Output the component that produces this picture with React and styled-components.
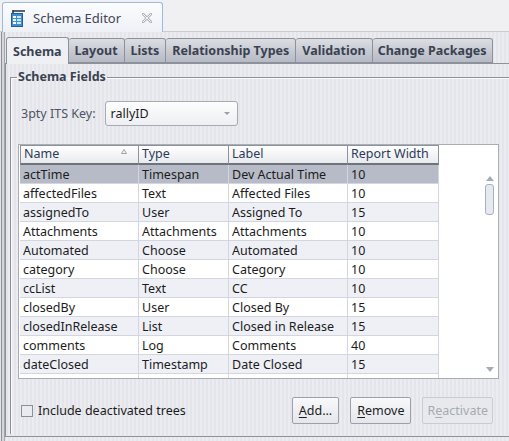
import styled, { createGlobalStyle } from 'styled-components';

const stripes = `repeating-linear-gradient(90deg, #e4e5ea 0px, #e4e5ea 2px, #ececf0 2px, #ececf0 4px)`;

const GlobalStyle = createGlobalStyle`
    html, body {
        margin: 0;
        padding: 0;
    }
    body {
        font-family: "Noto Sans", "Open Sans", sans-serif;
        font-size: 12px;
        color: #1c1c1c;
        background: #e8e9ed;
    }
`;

const Window = styled.div`
    width: 509px;
    height: 441px;
    background: ${stripes};
    display: flex;
    flex-direction: column;
    overflow: hidden;
    box-sizing: border-box;
`;

const ViewBar = styled.div`
    height: 32px;
    display: flex;
    align-items: flex-end;
    padding-left: 2px;
    border-bottom: 1px solid #c9ccd3;
    background: #f0f0f3;
`;

const ViewTab = styled.div`
    width: 161px;
    height: 30px;
    box-sizing: border-box;
    border: 1px solid #9dbbe0;
    border-bottom: none;
    border-radius: 3px 3px 0 0;
    background: linear-gradient(#fbfcfe, #eef1f6);
    display: flex;
    align-items: center;
    padding: 0 10px 0 7px;
    gap: 7px;
    font-size: 13px;
    color: #3f4654;
    margin-bottom: -1px;
    span {
        flex: 1;
    }
`;

const Body = styled.div`
    flex: 1;
    display: flex;
    flex-direction: column;
    margin-left: 1px;
    border-left: 1px solid #8e9096;
    padding: 4px 5px 4px 3px;
    box-shadow: inset 2px 0 0 #d4d6da, inset 3px 0 0 #a4a7ad;
`;

const TabRow = styled.div`
    height: 27px;
    display: flex;
    align-items: flex-end;
    padding-left: 1px;
`;

const Tab = styled.div`
    box-sizing: border-box;
    height: ${({ $active }) => ($active ? '27px' : '25px')};
    padding: 0 ${({ $active, $pad }) => ($active ? 6 : $pad || 6)}px;
    display: flex;
    align-items: center;
    font-weight: bold;
    font-size: 12.5px;
    color: #3a4252;
    border: 1px solid #8c919c;
    border-bottom: ${({ $active }) => ($active ? 'none' : '1px solid #8c919c')};
    border-left: ${({ $first, $active }) => ($first || $active ? '1px solid #8c919c' : 'none')};
    border-radius: 3px 3px 0 0;
    background: ${({ $active }) =>
        $active ? '#eff0f3' : 'linear-gradient(#dcdee3, #c4c7cf 60%, #b6bac4)'};
    position: relative;
    z-index: ${({ $active }) => ($active ? 1 : 0)};
    margin-bottom: ${({ $active }) => ($active ? '-1px' : '0')};
`;

const Panel = styled.div`
    flex: 1;
    border: 1px solid #8c919c;
    border-right: none;
    margin-right: -6px;
    background: ${stripes};
    padding: 6px 0 2px 4px;
    display: flex;
`;

const Group = styled.fieldset`
    flex: 1;
    margin: 0;
    border: none;
    border-top: 1px solid #8d9098;
    border-left: 1px solid #8d9098;
    border-right: 1px solid #8d9098;
    box-shadow: inset 1px 1px 0 #fafafa;
    padding: 10px 10px 10px 7px;
    display: flex;
    flex-direction: column;
    legend {
        font-weight: bold;
        font-size: 12.5px;
        color: #3a4252;
        padding: 0 1px;
        margin-left: -1px;
        line-height: 14px;
    }
`;

const KeyRow = styled.div`
    display: flex;
    align-items: center;
    gap: 9px;
    padding-left: 3px;
    margin-top: 7px;
    label {
        color: #4c5566;
        font-size: 12.5px;
    }
`;

const Combo = styled.div`
    width: 133px;
    height: 25px;
    box-sizing: border-box;
    border: 1px solid #a6aab2;
    border-radius: 3px;
    background: linear-gradient(#fdfdfd, #eeeff2);
    display: flex;
    align-items: center;
    justify-content: space-between;
    padding: 0 7px 0 5px;
    font-size: 12.5px;
    color: #1c1c1c;
    i {
        width: 0;
        height: 0;
        border-left: 3px solid transparent;
        border-right: 3px solid transparent;
        border-top: 3px solid #9a9ea6;
    }
`;

const Table = styled.div`
    margin-top: 18px;
    height: 235px;
    box-sizing: border-box;
    border: 1px solid #a9adb6;
    background: #fff;
    display: flex;
    overflow: hidden;
`;

const Columns = styled.div`
    width: 420px;
    display: flex;
    flex-direction: column;
`;

const cols = '119px 90px 119px 91px';

const HeaderRow = styled.div`
    flex-shrink: 0;
    display: grid;
    grid-template-columns: ${cols};
    height: 20px;
    margin-left: 1px;
`;

const HeaderCell = styled.div`
    box-sizing: border-box;
    border: 1px solid #8e929c;
    border-left: ${({ $first }) => ($first ? '1px solid #8e929c' : 'none')};
    border-bottom: 2px solid #6e737c;
    background: linear-gradient(#ffffff, #e9eaee);
    color: #2b3a58;
    font-size: 12.5px;
    padding: 0 3px;
    display: flex;
    align-items: center;
    justify-content: space-between;
    line-height: 1;
    svg {
        margin-top: -6px;
        margin-right: 8px;
    }
`;

const Row = styled.div`
    flex-shrink: 0;
    display: grid;
    grid-template-columns: ${cols};
    height: 19px;
    margin-left: 1px;
    background: ${({ $selected, $odd }) => ($selected ? '#b7bbc7' : $odd ? '#eef0f6' : '#ffffff')};
`;

const Cell = styled.div`
    box-sizing: border-box;
    border-right: 1px solid #d3d6de;
    border-bottom: 1px solid #d3d6de;
    padding: 0 3px;
    display: flex;
    align-items: center;
    font-size: 12.5px;
    color: #1c1c1c;
    white-space: nowrap;
    overflow: hidden;
`;

const Filler = styled.div`
    flex: 1;
`;

const ScrollBar = styled.div`
    width: 17px;
    display: flex;
    flex-direction: column;
    align-items: center;
    padding-top: 31px;
    padding-bottom: 6px;
    box-sizing: border-box;
`;

const Thumb = styled.div`
    width: 7px;
    height: 29px;
    margin-top: 3px;
    border: 1px solid #a9b0c0;
    border-radius: 3px;
    background: #e6e9f0;
`;

const Arrow = styled.div`
    width: 0;
    height: 0;
    border-left: 4px solid transparent;
    border-right: 4px solid transparent;
    ${({ $down }) => ($down ? 'border-top: 5px solid #a7abb4;' : 'border-bottom: 5px solid #a7abb4;')}
`;

const Footer = styled.div`
    margin-top: 18px;
    display: flex;
    align-items: center;
    padding-left: 3px;
`;

const Check = styled.label`
    flex: 1;
    display: flex;
    align-items: center;
    gap: 5px;
    font-size: 12.5px;
    color: #1c1c1c;
    span.box {
        width: 10px;
        height: 10px;
        border: 1px solid #8a8f99;
        background: #e9ebf0;
    }
`;

const Buttons = styled.div`
    display: flex;
    gap: 11px;
    margin-right: 6px;
`;

const Button = styled.button`
    height: 27px;
    box-sizing: border-box;
    padding: 0 ${({ $pad }) => $pad || 6}px;
    border: 1px solid ${({ disabled }) => (disabled ? '#c8cbd2' : '#9ba0aa')};
    border-radius: 2px;
    background: ${({ disabled }) =>
        disabled ? '#e8e9ed' : 'linear-gradient(#f9f9fb, #e4e6eb)'};
    font-family: inherit;
    font-size: 12.5px;
    color: ${({ disabled }) => (disabled ? '#a6aab3' : '#1c1c1c')};
    u {
        text-decoration-thickness: 1px;
        text-underline-offset: 2px;
    }
`;

const rows = [
    ['actTime', 'Timespan', 'Dev Actual Time', '10'],
    ['affectedFiles', 'Text', 'Affected Files', '10'],
    ['assignedTo', 'User', 'Assigned To', '15'],
    ['Attachments', 'Attachments', 'Attachments', '10'],
    ['Automated', 'Choose', 'Automated', '10'],
    ['category', 'Choose', 'Category', '10'],
    ['ccList', 'Text', 'CC', '10'],
    ['closedBy', 'User', 'Closed By', '15'],
    ['closedInRelease', 'List', 'Closed in Release', '15'],
    ['comments', 'Log', 'Comments', '40'],
    ['dateClosed', 'Timestamp', 'Date Closed', '15'],
    ['', '', '', ''],
];

function EditorIcon() {
    return (
        <svg width="16" height="18" viewBox="0 0 16 18">
            <rect x="1.5" y="4.5" width="11" height="13" fill="#3d8fd6" stroke="#1f5f9e" />
            <rect x="3" y="7" width="3" height="2" fill="#fff" />
            <rect x="7" y="7" width="4" height="2" fill="#cfe6fa" />
            <rect x="3" y="10" width="3" height="2" fill="#fff" />
            <rect x="7" y="10" width="4" height="2" fill="#cfe6fa" />
            <rect x="3" y="13" width="3" height="2" fill="#fff" />
            <rect x="7" y="13" width="4" height="2" fill="#cfe6fa" />
            <path d="M3 1 L3 4 M3 2 L15 2" stroke="#2a3140" strokeWidth="1.6" />
        </svg>
    );
}

function CloseIcon() {
    return (
        <svg width="10" height="10" viewBox="0 0 10 10">
            <path d="M1 1 L9 9 M9 1 L1 9" stroke="#b3b6bd" strokeWidth="2.6" strokeLinecap="square" />
            <path d="M1 1 L9 9 M9 1 L1 9" stroke="#f7f8fa" strokeWidth="0.9" />
        </svg>
    );
}

const tabs = [
    ['Schema', 6],
    ['Layout', 6],
    ['Lists', 6],
    ['Relationship Types', 6],
    ['Validation', 6],
    ['Change Packages', 5],
];

export default function App() {
    return (
        <>
            <GlobalStyle />
            <Window>
                <ViewBar>
                    <ViewTab>
                        <EditorIcon />
                        <span>Schema Editor</span>
                        <CloseIcon />
                    </ViewTab>
                </ViewBar>
                <Body>
                    <TabRow>
                        {tabs.map(([t, pad], i) => (
                            <Tab key={t} $active={i === 0} $first={i === 0} $pad={pad}>{t}</Tab>
                        ))}
                    </TabRow>
                    <Panel>
                        <Group>
                            <legend>Schema Fields</legend>
                            <KeyRow>
                                <label>3pty ITS Key:</label>
                                <Combo>rallyID<i /></Combo>
                            </KeyRow>
                            <Table>
                                <Columns>
                                    <HeaderRow>
                                        <HeaderCell $first>
                                            Name
                                            <svg width="6" height="5" viewBox="0 0 6 5">
                                                <path d="M0.5 4.5 L3 0.5 L5.5 4.5 Z" fill="none" stroke="#8a8e96" strokeWidth="0.8" />
                                            </svg>
                                        </HeaderCell>
                                        <HeaderCell>Type</HeaderCell>
                                        <HeaderCell>Label</HeaderCell>
                                        <HeaderCell>Report Width</HeaderCell>
                                    </HeaderRow>
                                    {rows.map((r, i) => (
                                        <Row key={i} $selected={i === 0} $odd={i % 2 === 0}>
                                            {r.map((c, j) => (
                                                <Cell key={j}>{c}</Cell>
                                            ))}
                                        </Row>
                                    ))}
                                </Columns>
                                <Filler />
                                <ScrollBar>
                                    <Arrow />
                                    <Thumb />
                                    <Filler />
                                    <Arrow $down />
                                </ScrollBar>
                            </Table>
                            <Footer>
                                <Check>
                                    <span className="box" />
                                    Include deactivated trees
                                </Check>
                                <Buttons>
                                    <Button $pad={6}><u>A</u>dd...</Button>
                                    <Button $pad={6}><u>R</u>emove</Button>
                                    <Button disabled $pad={4}>R<u>e</u>activate</Button>
                                </Buttons>
                            </Footer>
                        </Group>
                    </Panel>
                </Body>
            </Window>
        </>
    );
}
